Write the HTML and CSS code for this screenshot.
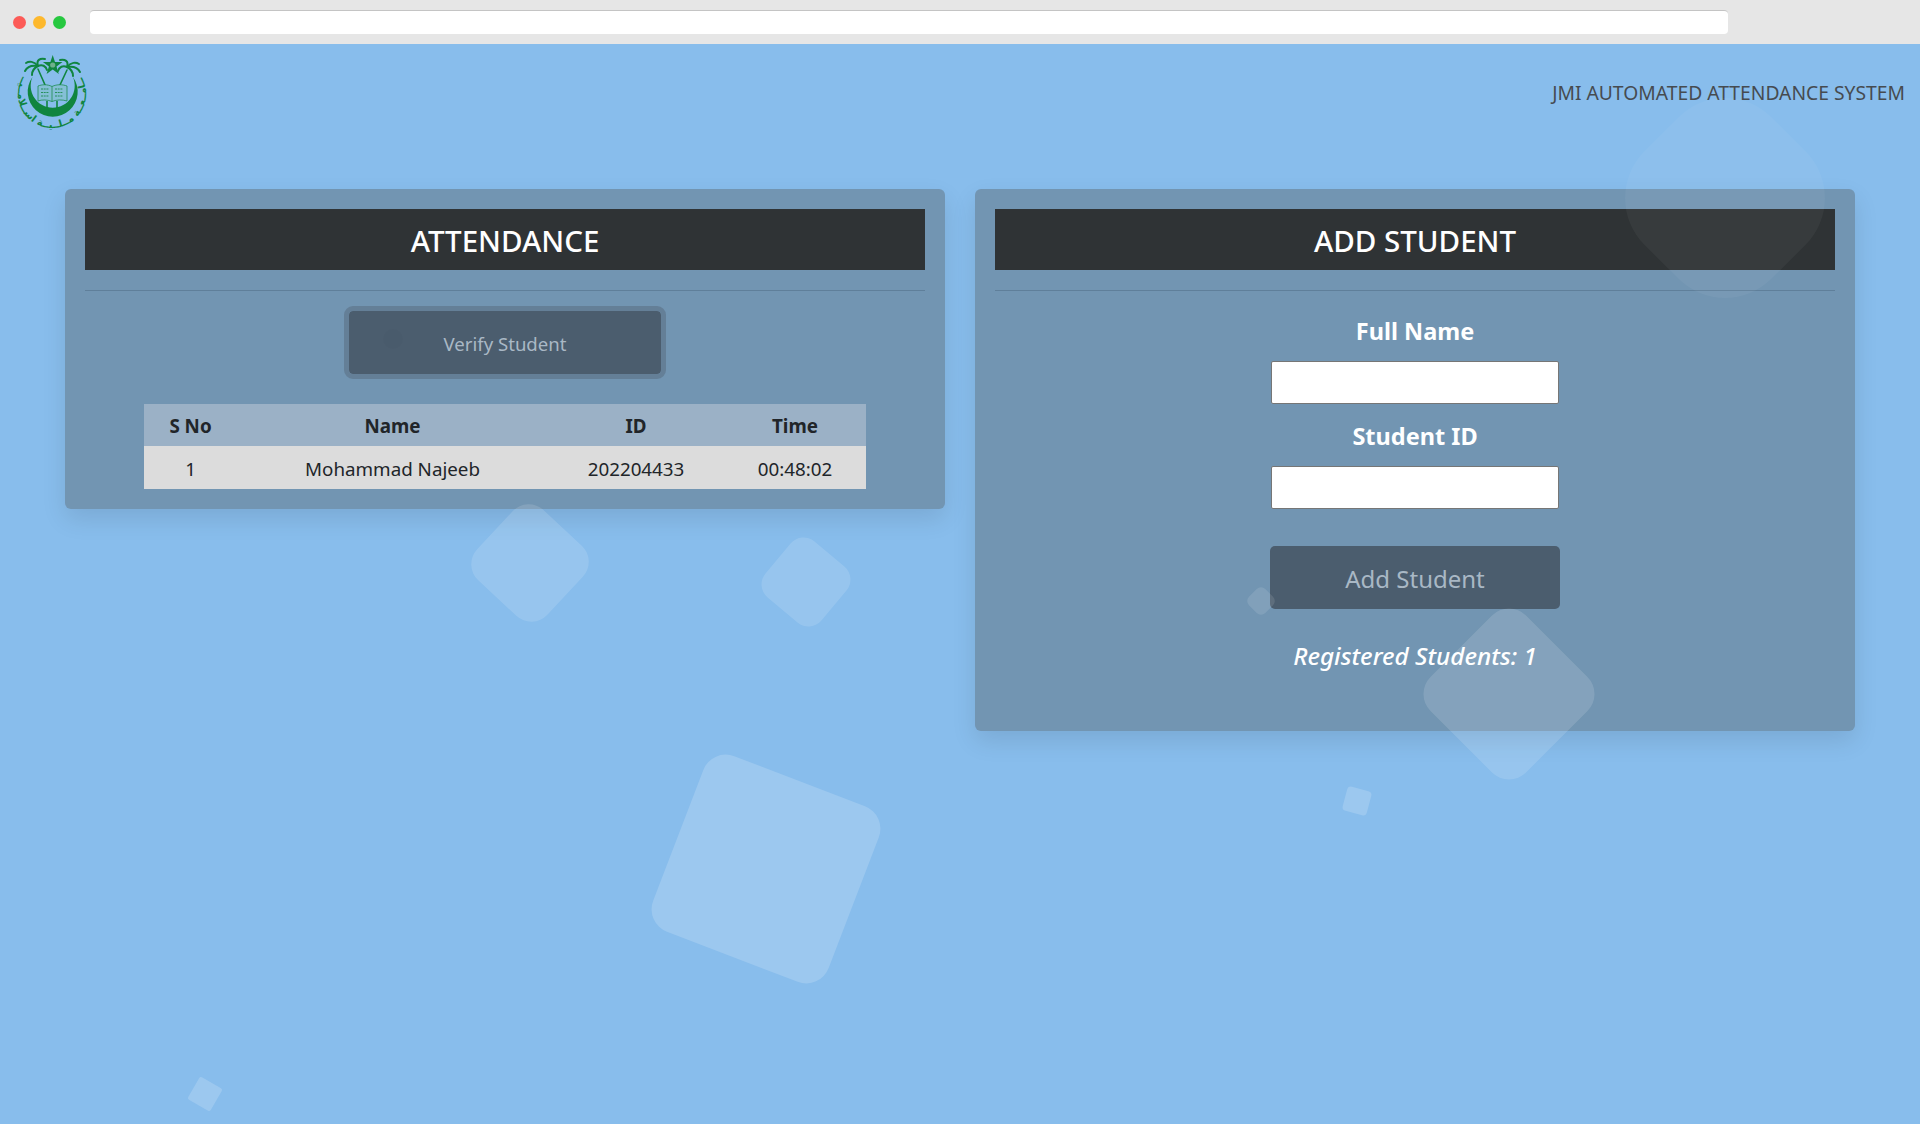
FILE: index.html
```html
<!DOCTYPE html>
<html lang="en">
<head>
<meta charset="utf-8">
<title>JMI Automated Attendance System</title>
<link rel="stylesheet" href="styles.css">
</head>
<body>
<div class="chrome">
  <div class="dots"><span class="dot dot-red"></span><span class="dot dot-yellow"></span><span class="dot dot-green"></span></div>
  <div class="address"></div>
</div>
<header class="topbar">
  <svg class="logo" viewBox="0 0 70 76" width="70" height="76" aria-label="Jamia Millia Islamia logo">
    <defs><path id="ring" d="M5 23 A34 34 0 1 0 65 23"/></defs>
    <g fill="#10853f" stroke="none">
      <polygon points="35.7,0 38,7 45.5,7 39.5,11.5 41.8,19 35.7,14.5 29.6,19 31.9,11.5 25.9,7 33.4,7"/>
      <circle cx="35.7" cy="10" r="2.6" fill="#6fb08c"/>
      <path d="M15.5 22 A25 25 0 1 0 55.9 22 A22 22 0 1 1 15.5 22Z"/>
    </g>
    <g fill="none" stroke="#10853f" stroke-width="2" stroke-linecap="round">
      <path d="M21 14 L28.5 31" stroke-width="1.6"/>
      <path d="M50 15 L42.5 31" stroke-width="1.6"/>
      <path d="M21 11 C17 6 12 6 9 8"/>
      <path d="M21 11 C19 5 23 3 28 4"/>
      <path d="M21 11 C15 10 10 12 8 16"/>
      <path d="M21 11 C25 9 29 11 30 15"/>
      <path d="M21 11 C17 13 15 16 15 20"/>
      <path d="M50 12 C54 7 59 7 62 9"/>
      <path d="M50 12 C52 6 48 4 43 5"/>
      <path d="M50 12 C56 11 61 13 63 17"/>
      <path d="M50 12 C46 10 42 12 41 16"/>
      <path d="M50 12 C54 14 56 17 56 21"/>
    </g>
    <g fill="none" stroke="#10853f" stroke-width="1.1">
      <path d="M35 31.5 C30 29 25 29.5 21 31 L21 46 C25 44.5 30 44.5 35 46.5 C40 44.5 45 44.5 50 46 L50 31 C46 29.5 40 29 35 31.5Z" fill="#84bfd6" stroke-width=".7"/>
      <path d="M35 31.5 V46.5" stroke-width=".7"/>
      <path d="M30 46 V55 M40 46 V55" stroke-width="1.6"/>
      <path d="M24 34 h8 M24 37.5 h8 M24 41 h8 M38 34 h8 M38 37.5 h8 M38 41 h8" stroke-width=".8" stroke-dasharray="2 .7"/>
    </g>
    <text class="logo-ring" direction="rtl"><textPath href="#ring" startOffset="50%" text-anchor="middle">جــامــعــة  مــلــيــة  اســلامــيــة</textPath></text>
  </svg>
  <h1 class="site-title">JMI AUTOMATED ATTENDANCE SYSTEM</h1>
</header>
<main class="panels">
  <section class="card">
    <h2 class="card-title">ATTENDANCE</h2>
    <hr class="rule">
    <div class="verify-wrap"><button class="btn btn-verify" type="button">Verify Student</button></div>
    <table class="att-table">
      <colgroup><col class="col-sno"><col class="col-name"><col class="col-id"><col class="col-time"></colgroup>
      <thead><tr><th>S No</th><th>Name</th><th>ID</th><th>Time</th></tr></thead>
      <tbody><tr><td>1</td><td>Mohammad Najeeb</td><td>202204433</td><td>00:48:02</td></tr></tbody>
    </table>
  </section>
  <section class="card">
    <h2 class="card-title">ADD STUDENT</h2>
    <hr class="rule">
    <form class="student-form">
      <label class="field-label" for="fullname">Full Name</label>
      <input class="field-input" id="fullname" type="text">
      <label class="field-label" for="studentid">Student ID</label>
      <input class="field-input" id="studentid" type="text">
      <button class="btn btn-add" type="button">Add Student</button>
      <p class="reg-count">Registered Students: 1</p>
    </form>
  </section>
</main>
<div class="squares" aria-hidden="true">
  <span class="sq sq-a"></span><span class="sq sq-b"></span><span class="sq sq-c"></span>
  <span class="sq sq-d"></span><span class="sq sq-e"></span><span class="sq sq-f"></span>
  <span class="sq sq-g"></span><span class="sq sq-h"></span><span class="sq sq-i"></span>
</div>
</body>
</html>
```
FILE: styles.css
```css
* { box-sizing: border-box; }
html, body { margin: 0; height: 100%; }
body {
  position: relative;
  overflow: hidden;
  background: #88bdec;
  font-family: "Noto Sans", "Open Sans", sans-serif;
  color: #212529;
}
.chrome {
  height: 44px;
  background: #e6e6e6;
  display: flex;
  align-items: center;
  padding: 0 192px 0 13px;
}
.dots { display: flex; gap: 7px; width: 77px; }
.dot { width: 13px; height: 13px; border-radius: 50%; }
.dot-red { background: #fc5b57; }
.dot-yellow { background: #fdb82d; }
.dot-green { background: #27c840; }
.address {
  flex: 1;
  height: 24px;
  background: #fff;
  border-top: 1px solid #c4c4c4;
  border-radius: 4px;
}
.topbar {
  height: 145px;
  display: flex;
  justify-content: space-between;
  align-items: flex-start;
  padding: 11px 15px 0 17px;
}
.logo { display: block; overflow: visible; }
.logo-ring { font-family: "DejaVu Sans", sans-serif; font-size: 10px; font-weight: 700; fill: #10853f; }
.site-title {
  margin: 25px 0 0;
  font-size: 19.3px;
  line-height: 26px;
  font-weight: 400;
  color: #464b50;
}
.panels {
  display: grid;
  grid-template-columns: 880px 880px;
  gap: 30px;
  align-items: start;
  padding: 0 65px;
}
.card {
  background: #7295b2;
  border-radius: 6px;
  padding: 20px;
  box-shadow: 0 10px 24px rgba(0, 0, 0, .1);
}
.card-title {
  margin: 0;
  height: 61px;
  background: #2f3335;
  color: #fff;
  text-align: center;
  font-size: 29.5px;
  line-height: 64px;
  font-weight: 500;
}
.rule { margin: 20px 0 0; border: 0; border-top: 1px solid #5f7f9a; }
.verify-wrap { display: flex; justify-content: center; margin-top: 15px; }
.btn {
  font-family: inherit;
  background: #4b5d6e;
  color: #a9b8c5;
  cursor: pointer;
}
.btn-verify {
  width: 322px;
  height: 73px;
  padding: 2px 0 0;
  font-size: 18.6px;
  border: 5px solid #647f97;
  border-radius: 9px;
  background-clip: padding-box;
}
.att-table {
  width: 722px;
  margin: 25px auto 0;
  border-collapse: collapse;
  table-layout: fixed;
  font-size: 18.8px;
  text-align: center;
}
.col-sno { width: 93px; }
.col-name { width: 311px; }
.col-id { width: 176px; }
.att-table th {
  height: 42px;
  padding: 1px 0 0;
  background: #9bb1c6;
  font-weight: 700;
}
.att-table td {
  height: 43px;
  padding: 3px 0 0;
  background: #dcdcdc;
}
.student-form { display: flex; flex-direction: column; align-items: center; }
.field-label {
  color: #fff;
  font-size: 23.5px;
  font-weight: 700;
  line-height: 32px;
  margin-top: 24px;
}
.field-label + .field-input { margin-top: 14px; }
.field-input + .field-label { margin-top: 16px; }
.field-input {
  width: 288px;
  height: 43px;
  background: #fff;
  border: 1px solid #767676;
  border-radius: 2px;
}
.btn-add {
  width: 290px;
  height: 63px;
  margin-top: 37px;
  padding: 2px 0 0;
  font-size: 24px;
  border: 0;
  border-radius: 5px;
}
.reg-count {
  margin: 30px 0 38px;
  color: #fff;
  font-size: 24.3px;
  line-height: 34px;
  font-style: italic;
  font-weight: 500;
}
.squares { position: absolute; inset: 0; pointer-events: none; overflow: hidden; }
.sq { position: absolute; display: block; background: rgba(255, 255, 255, .17); transform: translate(-50%, -50%) rotate(var(--rot)); }
.sq-a { left: 765.5px; top: 869px; width: 188px; height: 188px; border-radius: 24px; --rot: 21deg; }
.sq-b { left: 530px; top: 563px; width: 96px; height: 96px; border-radius: 22px; --rot: 43deg; background: rgba(255, 255, 255, .13); }
.sq-c { left: 805.5px; top: 581.5px; width: 73px; height: 73px; border-radius: 17px; --rot: 40deg; background: rgba(255, 255, 255, .13); }
.sq-d { left: 1725px; top: 198px; width: 180px; height: 180px; border-radius: 66px; --rot: 45deg; background: rgba(255, 255, 255, .045); }
.sq-e { left: 1509px; top: 694px; width: 135px; height: 135px; border-radius: 24px; --rot: 45deg; background: rgba(255, 255, 255, .13); }
.sq-f { left: 1260.5px; top: 601px; width: 23px; height: 23px; border-radius: 6px; --rot: 45deg; background: rgba(255, 255, 255, .11); }
.sq-g { left: 1357px; top: 801px; width: 25px; height: 25px; border-radius: 4px; --rot: 15deg; }
.sq-h { left: 205px; top: 1094px; width: 26px; height: 26px; border-radius: 2px; --rot: 30deg; }
.sq-i { left: 393px; top: 339px; width: 20px; height: 20px; border-radius: 50%; --rot: 0deg; background: rgba(0, 0, 0, .015); }
```
